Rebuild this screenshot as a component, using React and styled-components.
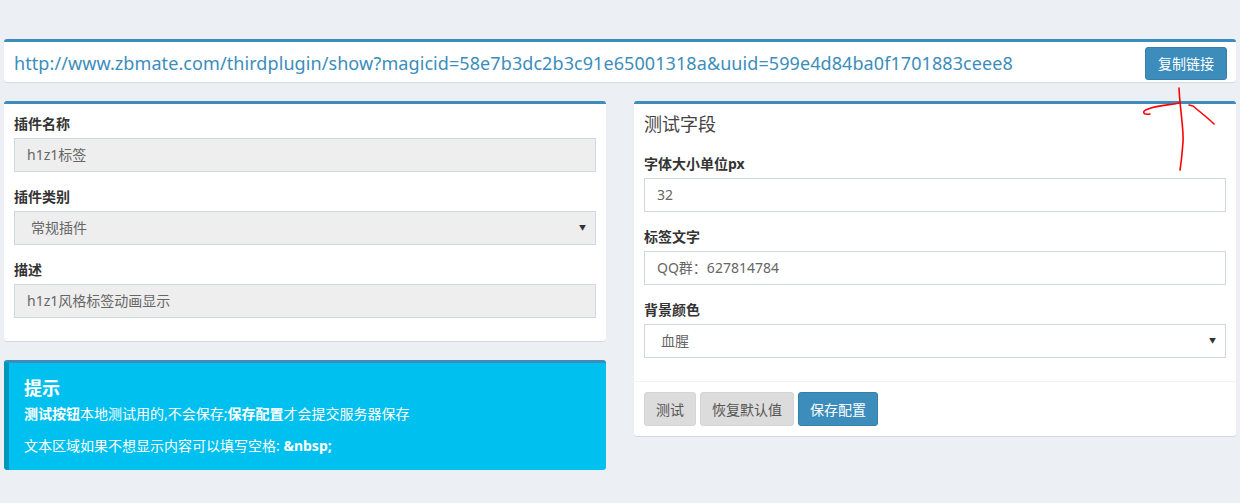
import React from 'react';
import styled, { createGlobalStyle } from 'styled-components';

const GlobalStyle = createGlobalStyle`
  html, body {
    margin: 0;
    padding: 0;
    background: #ecf0f5;
  }
  body {
    font-family: "Noto Sans", "Noto Sans CJK SC", sans-serif;
    font-size: 14px;
    color: #333;
  }
  * { box-sizing: border-box; }
`;

const Page = styled.div`
  position: relative;
  width: 1240px;
  height: 503px;
  padding: 39px 4px 0;
  overflow: hidden;
`;

const Box = styled.div`
  background: #fff;
  border-top: 3px solid #3c8dbc;
  border-radius: 3px;
  box-shadow: 0 1px 1px rgba(0, 0, 0, 0.1);
  margin-bottom: 19px;
`;

const LinkBar = styled(Box)`
  display: flex;
  align-items: center;
  justify-content: space-between;
  height: 43px;
  padding: 2px 9px 0 10px;
`;

const Url = styled.span`
  color: #3c8dbc;
  font-size: 18px;
  letter-spacing: 0.08px;
  white-space: nowrap;
`;

const Columns = styled.div`
  display: grid;
  grid-template-columns: 1fr 1fr;
  column-gap: 28px;
  align-items: start;
`;

const Column = styled.div`
  display: flex;
  flex-direction: column;
`;

const BoxHeader = styled.div`
  padding: 10px;
  font-size: 18px;
  line-height: 20px;
  color: #444;
`;

const BoxBody = styled.div`
  padding: 10px 10px 8px;
`;

const BoxFooter = styled.div`
  border-top: 1px solid #f4f4f4;
  padding: 10px;
  display: flex;
  gap: 4px;
`;

const FormGroup = styled.div`
  margin-bottom: 15px;
`;

const Label = styled.div`
  font-weight: 700;
  line-height: 20px;
  margin-bottom: 4px;
  color: #333;
`;

const Field = styled.div`
  position: relative;
  height: 34px;
  border: 1px solid #d2d6de;
  background: ${p => (p.disabled ? '#eee' : '#fff')};
  color: #666;
  padding: 0 ${p => (p.select ? '16px' : '12px')};
  line-height: 32px;
  font-size: 14px;
`;

const Caret = styled.span`
  position: absolute;
  right: 9px;
  top: 0;
  font-size: 7px;
  color: #333;
`;

const Button = styled.button`
  height: 34px;
  padding: 0 11px;
  border-radius: 3px;
  font-family: inherit;
  font-size: 14px;
  border: 1px solid ${p => (p.primary ? '#367fa9' : '#d5d5d5')};
  background: ${p => (p.primary ? '#3c8dbc' : '#dcdcdc')};
  color: ${p => (p.primary ? '#fff' : '#555')};
`;

const CopyButton = styled(Button)`
  height: 33px;
  padding: 0 12px;
`;

const Callout = styled.div`
  background: #00c0ef;
  border-top: 3px solid #3c8dbc;
  border-left: 5px solid #0097bc;
  border-radius: 3px;
  color: #fff;
  padding: 15px 30px 13px 15px;
`;

const CalloutTitle = styled.h4`
  margin: 0 0 5px;
  font-size: 18px;
  line-height: 20px;
  font-weight: 700;
`;

const CalloutText = styled.p`
  margin: 0 0 10px;
  line-height: 22px;
  &:last-child { margin-bottom: 0; }
  b { font-weight: 700; }
`;

const Scribble = styled.svg`
  position: absolute;
  left: 1130px;
  top: 80px;
  pointer-events: none;
`;

const Input = ({ label, value, disabled }) => (
  <FormGroup>
    <Label>{label}</Label>
    <Field disabled={disabled}>{value}</Field>
  </FormGroup>
);

const Select = ({ label, value, disabled }) => (
  <FormGroup>
    <Label>{label}</Label>
    <Field disabled={disabled} select>
      {value}
      <Caret>▼</Caret>
    </Field>
  </FormGroup>
);

export default function App() {
  return (
    <>
      <GlobalStyle />
      <Page>
        <LinkBar>
          <Url>http://www.zbmate.com/thirdplugin/show?magicid=58e7b3dc2b3c91e65001318a&amp;uuid=599e4d84ba0f1701883ceee8</Url>
          <CopyButton primary>复制链接</CopyButton>
        </LinkBar>

        <Columns>
          <Column>
            <Box>
              <BoxBody>
                <Input label="插件名称" value="h1z1标签" disabled />
                <Select label="插件类别" value="常规插件" disabled />
                <Input label="描述" value="h1z1风格标签动画显示" disabled />
              </BoxBody>
            </Box>
            <Callout>
              <CalloutTitle>提示</CalloutTitle>
              <CalloutText>
                <b>测试按钮</b>本地测试用的,不会保存;<b>保存配置</b>才会提交服务器保存
              </CalloutText>
              <CalloutText>
                文本区域如果不想显示内容可以填写空格: <b>&amp;nbsp;</b>
              </CalloutText>
            </Callout>
          </Column>

          <Column>
            <Box>
              <BoxHeader>测试字段</BoxHeader>
              <BoxBody>
                <Input label="字体大小单位px" value="32" />
                <Input label="标签文字" value="QQ群：627814784" />
                <Select label="背景颜色" value="血腥" />
              </BoxBody>
              <BoxFooter>
                <Button>测试</Button>
                <Button>恢复默认值</Button>
                <Button primary>保存配置</Button>
              </BoxFooter>
            </Box>
          </Column>
        </Columns>

        <Scribble width="100" height="100" viewBox="0 0 100 100">
          <g fill="none" stroke="#f00" strokeWidth="1.6" strokeLinecap="round" strokeLinejoin="round">
            <path d="M49 8 C50 30 54 50 53 62 C52 75 51 84 50 90" />
            <path d="M50 23 C40 25 28 25 18 29 C12 31 12 35 20 34" />
            <path d="M59 25 L63 26 C70 32 78 38 84 44" />
          </g>
        </Scribble>
      </Page>
    </>
  );
}
